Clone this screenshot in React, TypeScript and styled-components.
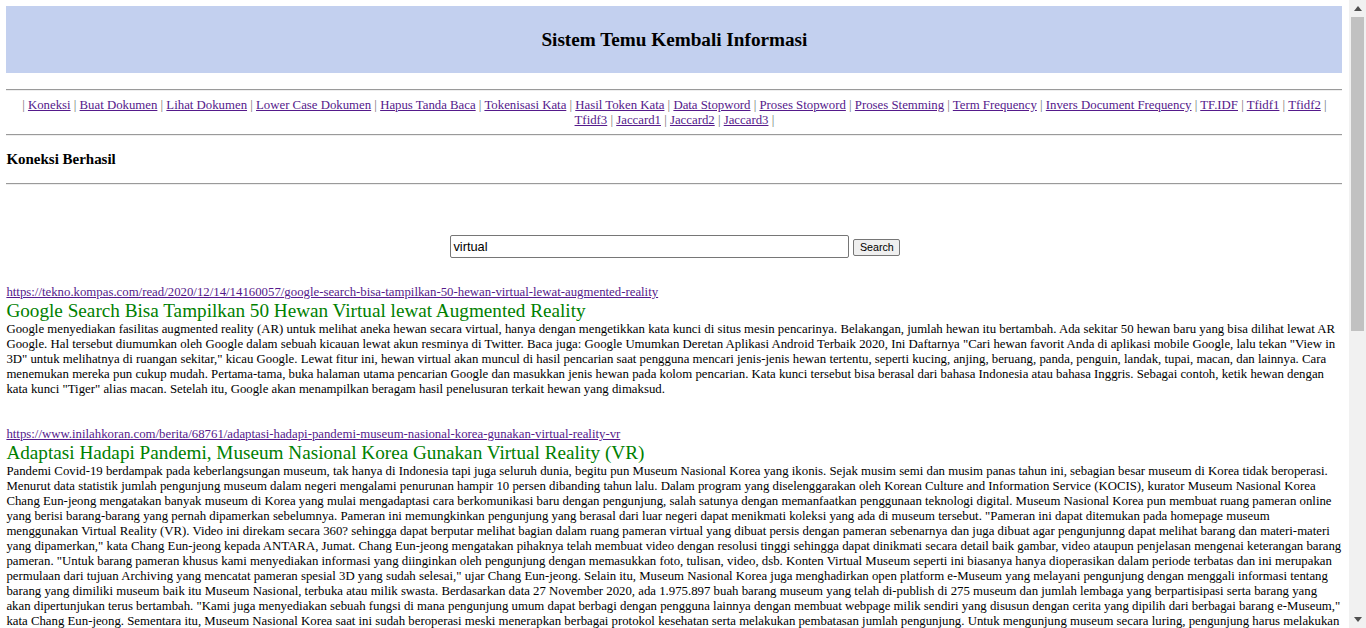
import React from "react";
import styled, { createGlobalStyle } from "styled-components";

const GlobalStyle = createGlobalStyle`
  html, body {
    margin: 0;
    padding: 0;
    background: #ffffff;
  }
  body {
    font-family: "Liberation Serif", "Times New Roman", serif;
    font-size: 12.8px;
    color: #000000;
  }
`;

const Page = styled.div`
  padding: 6.4px;
  max-width: 1336px;
`;

const Header = styled.header`
  background: #c3d0ef;
  padding: 6.4px;
`;

const HeaderTitle = styled.h2`
  margin: 15.9px 0;
  font-size: 19.2px;
  font-weight: bold;
  text-align: center;
`;

const Rule = styled.hr<{ $top?: number; $bottom?: number }>`
  height: 0;
  margin: ${(p) => (p.$top ?? 6.4)}px 0 ${(p) => (p.$bottom ?? 6.4)}px;
  border: none;
  border-top: 1px solid #9a9a9a;
  border-bottom: 1px solid #eeeeee;
`;

const Nav = styled.nav`
  text-align: center;
  font-size: 12.8px;
  line-height: normal;
`;

const Sep = styled.span`
  color: #6f6f6f;
`;

const NavLink = styled.a`
  color: #551a8b;
  text-decoration: underline;
`;

const Status = styled.h3`
  margin: 15px 0;
  font-size: 14.98px;
  font-weight: bold;
`;

const SearchForm = styled.form`
  display: flex;
  justify-content: center;
  align-items: center;
  gap: 4px;
  margin: 49.5px 0 0;
  padding-left: 2px;
`;

const SearchInput = styled.input`
  box-sizing: border-box;
  width: 399px;
  height: 23px;
  padding: 1px 2px;
  border: 1px solid #767676;
  border-radius: 2px;
  font-family: "Liberation Sans", Arial, sans-serif;
  font-size: 12.8px;
  color: #000;
  background: #fff;
  outline: none;
`;

const SearchButton = styled.button`
  box-sizing: border-box;
  height: 17px;
  width: 47px;
  padding: 0 4px;
  border: 1px solid #767676;
  border-radius: 2px;
  background: #efefef;
  font-family: "Liberation Sans", Arial, sans-serif;
  font-size: 10.7px;
  color: #000;
  margin-top: 2px;
`;

const Results = styled.section`
  margin-top: 27.7px;
  padding-bottom: 470px;
`;

const Result = styled.article`
  margin-bottom: 29.4px;
`;

const ResultUrl = styled.a`
  display: block;
  color: #551a8b;
  text-decoration: underline;
  font-size: 12.8px;
`;

const ResultTitle = styled.div`
  color: #008000;
  font-size: 19.2px;
  line-height: normal;
`;

const ResultBody = styled.p`
  margin: 0;
  font-size: 12.8px;
  line-height: normal;
`;

/* Page scrollbar as it appears in the screenshot, laid over the right edge */
const ScrollTrack = styled.aside`
  position: fixed;
  top: 0;
  right: 0;
  width: 17px;
  height: 100vh;
  background: #f1f1f1;
  display: flex;
  flex-direction: column;
  align-items: center;
`;

const ScrollArrow = styled.div`
  flex: 0 0 17px;
  width: 17px;
  display: flex;
  align-items: center;
  justify-content: center;
`;

const ScrollThumb = styled.div`
  width: 13px;
  height: 314px;
  background: #c1c1c1;
`;

const ScrollRest = styled.div`
  flex: 1;
`;

const navItems = [
  "Koneksi",
  "Buat Dokumen",
  "Lihat Dokumen",
  "Lower Case Dokumen",
  "Hapus Tanda Baca",
  "Tokenisasi Kata",
  "Hasil Token Kata",
  "Data Stopword",
  "Proses Stopword",
  "Proses Stemming",
  "Term Frequency",
  "Invers Document Frequency",
  "TF.IDF",
  "Tfidf1",
  "Tfidf2",
  "Tfidf3",
  "Jaccard1",
  "Jaccard2",
  "Jaccard3",
];

const results = [
  {
    url: "https://tekno.kompas.com/read/2020/12/14/14160057/google-search-bisa-tampilkan-50-hewan-virtual-lewat-augmented-reality",
    title: "Google Search Bisa Tampilkan 50 Hewan Virtual lewat Augmented Reality",
    body:
      'Google menyediakan fasilitas augmented reality (AR) untuk melihat aneka hewan secara virtual, hanya dengan mengetikkan kata kunci di situs mesin pencarinya. Belakangan, jumlah hewan itu bertambah. Ada sekitar 50 hewan baru yang bisa dilihat lewat AR Google. Hal tersebut diumumkan oleh Google dalam sebuah kicauan lewat akun resminya di Twitter. Baca juga: Google Umumkan Deretan Aplikasi Android Terbaik 2020, Ini Daftarnya "Cari hewan favorit Anda di aplikasi mobile Google, lalu tekan "View in 3D" untuk melihatnya di ruangan sekitar," kicau Google. Lewat fitur ini, hewan virtual akan muncul di hasil pencarian saat pengguna mencari jenis-jenis hewan tertentu, seperti kucing, anjing, beruang, panda, penguin, landak, tupai, macan, dan lainnya. Cara menemukan mereka pun cukup mudah. Pertama-tama, buka halaman utama pencarian Google dan masukkan jenis hewan pada kolom pencarian. Kata kunci tersebut bisa berasal dari bahasa Indonesia atau bahasa Inggris. Sebagai contoh, ketik hewan dengan kata kunci "Tiger" alias macan. Setelah itu, Google akan menampilkan beragam hasil penelusuran terkait hewan yang dimaksud.',
  },
  {
    url: "https://www.inilahkoran.com/berita/68761/adaptasi-hadapi-pandemi-museum-nasional-korea-gunakan-virtual-reality-vr",
    title: "Adaptasi Hadapi Pandemi, Museum Nasional Korea Gunakan Virtual Reality (VR)",
    body:
      'Pandemi Covid-19 berdampak pada keberlangsungan museum, tak hanya di Indonesia tapi juga seluruh dunia, begitu pun Museum Nasional Korea yang ikonis. Sejak musim semi dan musim panas tahun ini, sebagian besar museum di Korea tidak beroperasi. Menurut data statistik jumlah pengunjung museum dalam negeri mengalami penurunan hampir 10 persen dibanding tahun lalu. Dalam program yang diselenggarakan oleh Korean Culture and Information Service (KOCIS), kurator Museum Nasional Korea Chang Eun-jeong mengatakan banyak museum di Korea yang mulai mengadaptasi cara berkomunikasi baru dengan pengunjung, salah satunya dengan memanfaatkan penggunaan teknologi digital. Museum Nasional Korea pun membuat ruang pameran online yang berisi barang-barang yang pernah dipamerkan sebelumnya. Pameran ini memungkinkan pengunjung yang berasal dari luar negeri dapat menikmati koleksi yang ada di museum tersebut. "Pameran ini dapat ditemukan pada homepage museum menggunakan Virtual Reality (VR). Video ini direkam secara 360? sehingga dapat berputar melihat bagian dalam ruang pameran virtual yang dibuat persis dengan pameran sebenarnya dan juga dibuat agar pengunjunng dapat melihat barang dan materi-materi yang dipamerkan," kata Chang Eun-jeong kepada ANTARA, Jumat. Chang Eun-jeong mengatakan pihaknya telah membuat video dengan resolusi tinggi sehingga dapat dinikmati secara detail baik gambar, video ataupun penjelasan mengenai keterangan barang pameran. "Untuk barang pameran khusus kami menyediakan informasi yang diinginkan oleh pengunjung dengan memasukkan foto, tulisan, video, dsb. Konten Virtual Museum seperti ini biasanya hanya dioperasikan dalam periode terbatas dan ini merupakan permulaan dari tujuan Archiving yang mencatat pameran spesial 3D yang sudah selesai," ujar Chang Eun-jeong. Selain itu, Museum Nasional Korea juga menghadirkan open platform e-Museum yang melayani pengunjung dengan menggali informasi tentang barang yang dimiliki museum baik itu Museum Nasional, terbuka atau milik swasta. Berdasarkan data 27 November 2020, ada 1.975.897 buah barang museum yang telah di-publish di 275 museum dan jumlah lembaga yang berpartisipasi serta barang yang akan dipertunjukan terus bertambah. "Kami juga menyediakan sebuah fungsi di mana pengunjung umum dapat berbagi dengan pengguna lainnya dengan membuat webpage milik sendiri yang disusun dengan cerita yang dipilih dari berbagai barang e-Museum," kata Chang Eun-jeong. Sementara itu, Museum Nasional Korea saat ini sudah beroperasi meski menerapkan berbagai protokol kesehatan serta melakukan pembatasan jumlah pengunjung. Untuk mengunjung museum secara luring, pengunjung harus melakukan reservasi terlebih dahulu melalui situs resmi museum.',
  },
];

function Arrow({ up }: { up?: boolean }) {
  return (
    <svg width="8" height="5" viewBox="0 0 8 5" aria-hidden="true">
      <polygon points={up ? "4,0 8,5 0,5" : "0,0 8,0 4,5"} fill="#505050" />
    </svg>
  );
}

export default function App() {
  return (
    <>
      <GlobalStyle />
      <Page>
        <Header>
          <HeaderTitle>Sistem Temu Kembali Informasi</HeaderTitle>
        </Header>
        <Rule $top={16.3} />
        <Nav>
          <Sep>| </Sep>
          {navItems.map((item) => (
            <React.Fragment key={item}>
              <NavLink href="#">{item}</NavLink>
              <Sep> | </Sep>
            </React.Fragment>
          ))}
        </Nav>
        <Rule />
        <Status>Koneksi Berhasil</Status>
        <Rule />
        <SearchForm onSubmit={(e) => e.preventDefault()}>
          <SearchInput type="text" defaultValue="virtual" />
          <SearchButton type="submit">Search</SearchButton>
        </SearchForm>
        <Results>
          {results.map((r) => (
            <Result key={r.url}>
              <ResultUrl href="#">{r.url}</ResultUrl>
              <ResultTitle>{r.title}</ResultTitle>
              <ResultBody>{r.body}</ResultBody>
            </Result>
          ))}
        </Results>
      </Page>
      <ScrollTrack aria-hidden="true">
        <ScrollArrow>
          <Arrow up />
        </ScrollArrow>
        <ScrollThumb />
        <ScrollRest />
        <ScrollArrow>
          <Arrow />
        </ScrollArrow>
      </ScrollTrack>
    </>
  );
}
